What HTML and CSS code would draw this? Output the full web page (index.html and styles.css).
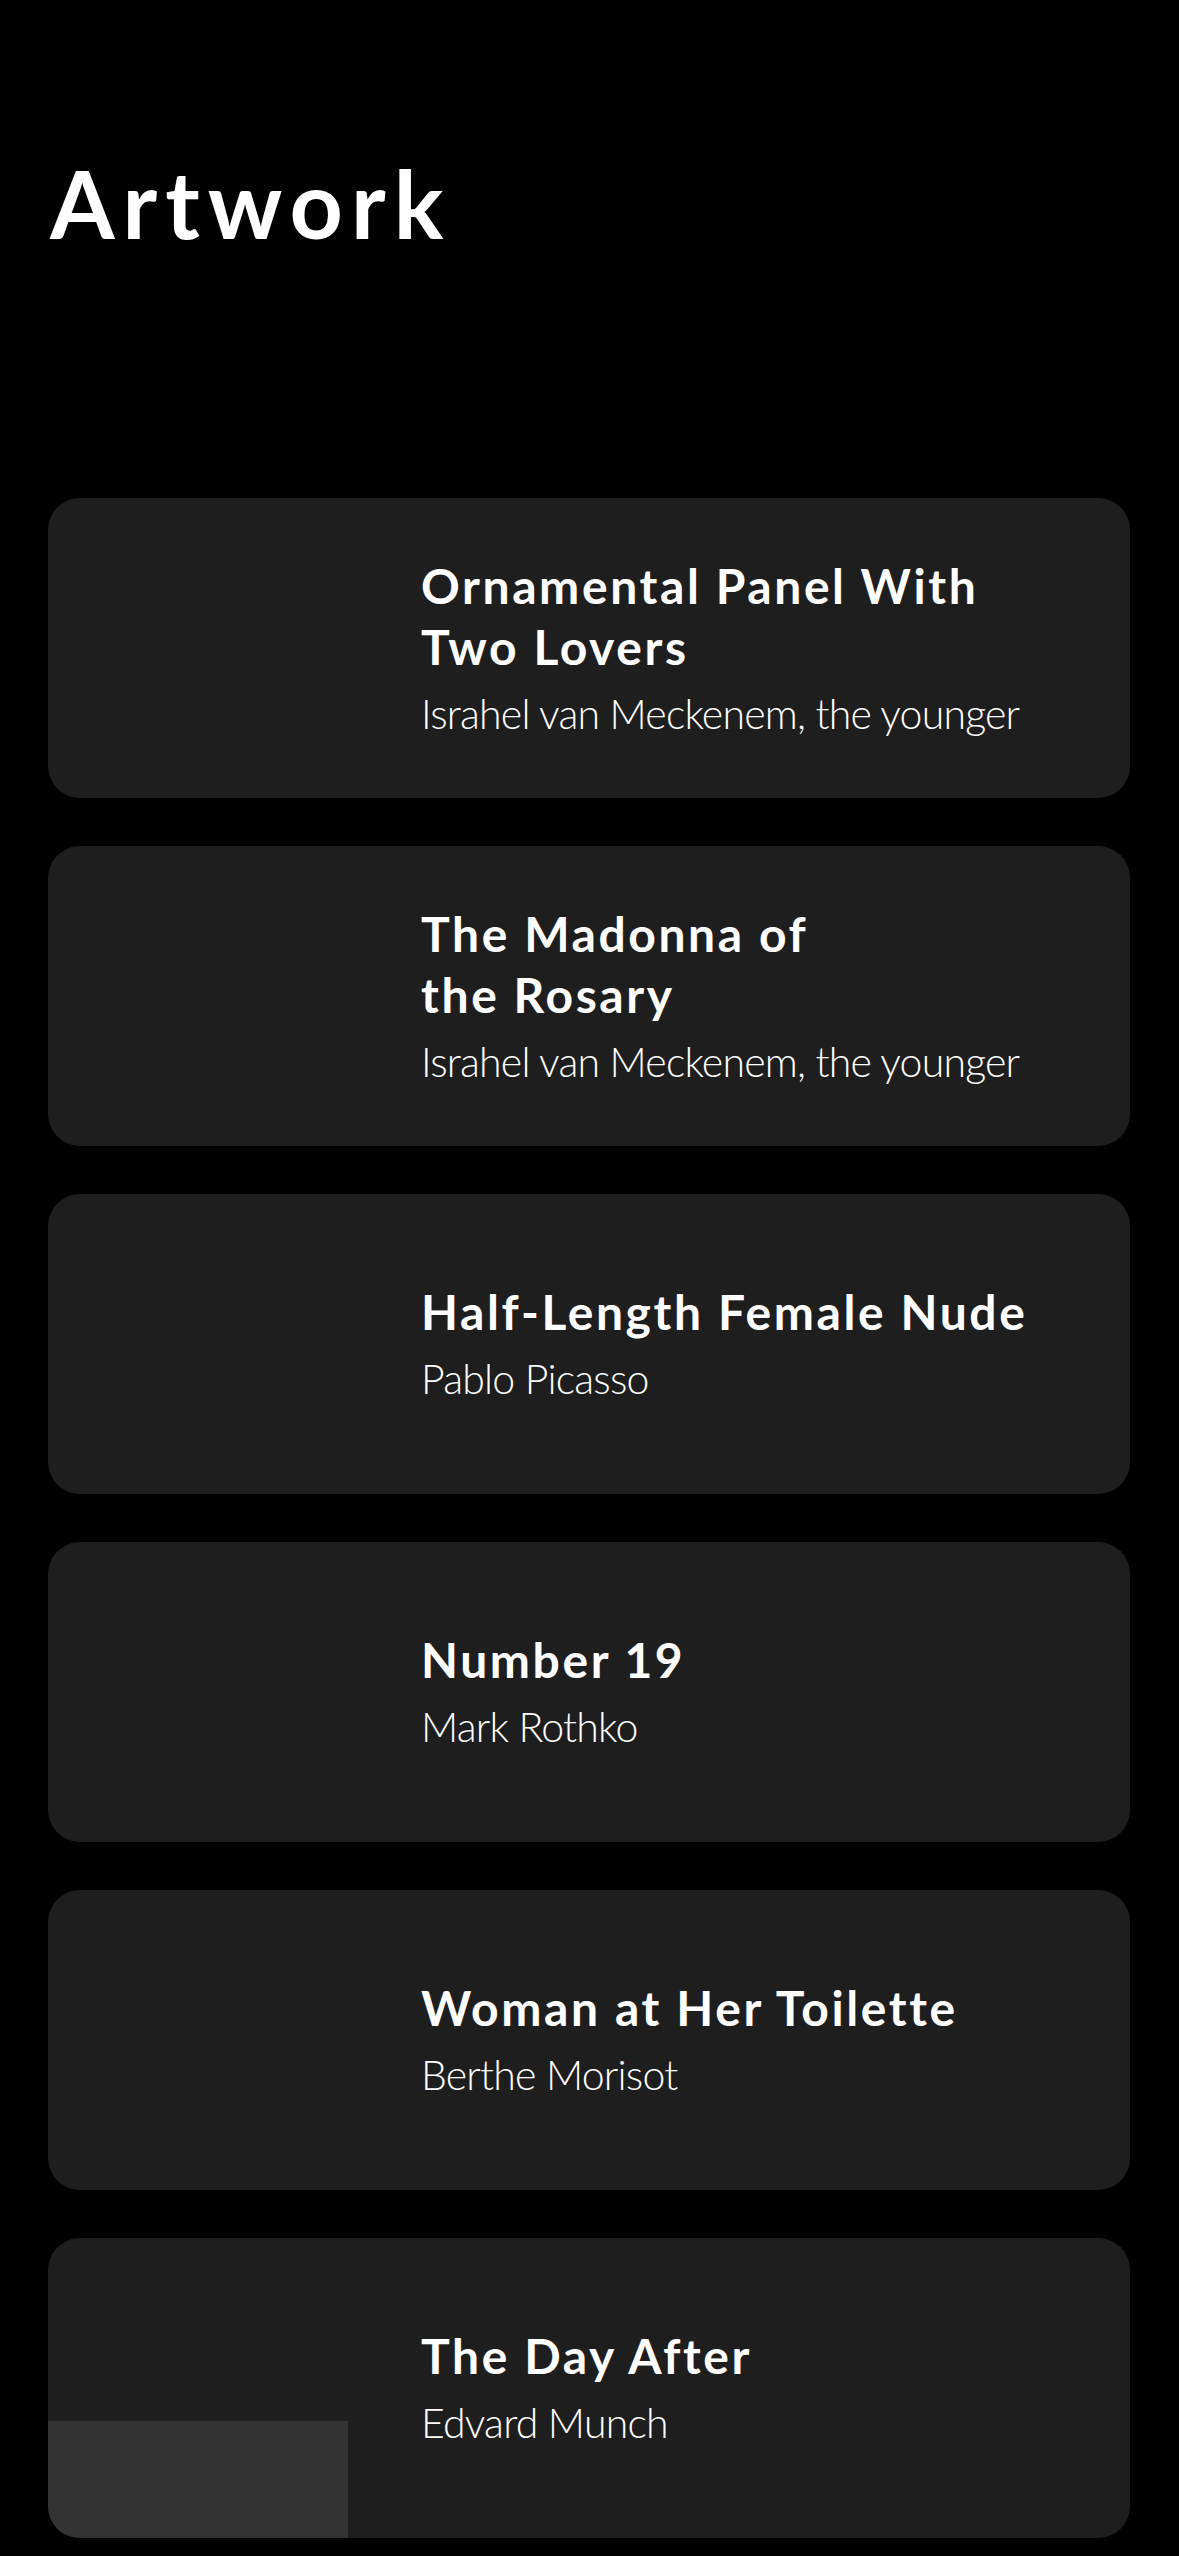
FILE: index.html
```html
<!DOCTYPE html>
<html lang="en">
<head>
<meta charset="utf-8">
<title>Artwork</title>
<link rel="stylesheet" href="styles.css">
</head>
<body>
<main class="page">
  <h1 class="page-title">Artwork</h1>
  <ul class="art-list">
    <li class="art-card">
      <div class="art-thumb"></div>
      <div class="art-text">
        <h2 class="art-title">Ornamental Panel With<br>Two Lovers</h2>
        <p class="art-artist">Israhel van Meckenem, the younger</p>
      </div>
    </li>
    <li class="art-card">
      <div class="art-thumb"></div>
      <div class="art-text">
        <h2 class="art-title">The Madonna of<br>the Rosary</h2>
        <p class="art-artist">Israhel van Meckenem, the younger</p>
      </div>
    </li>
    <li class="art-card">
      <div class="art-thumb"></div>
      <div class="art-text">
        <h2 class="art-title">Half-Length Female Nude</h2>
        <p class="art-artist">Pablo Picasso</p>
      </div>
    </li>
    <li class="art-card">
      <div class="art-thumb"></div>
      <div class="art-text">
        <h2 class="art-title">Number 19</h2>
        <p class="art-artist">Mark Rothko</p>
      </div>
    </li>
    <li class="art-card">
      <div class="art-thumb"></div>
      <div class="art-text">
        <h2 class="art-title">Woman at Her Toilette</h2>
        <p class="art-artist">Berthe Morisot</p>
      </div>
    </li>
    <li class="art-card">
      <div class="art-thumb"><div class="art-thumb-loading"></div></div>
      <div class="art-text">
        <h2 class="art-title">The Day After</h2>
        <p class="art-artist">Edvard Munch</p>
      </div>
    </li>
  </ul>
</main>
</body>
</html>
```
FILE: styles.css
```css
* {
  box-sizing: border-box;
}

html, body {
  margin: 0;
  padding: 0;
  background: #000000;
}

body {
  font-family: "Lato", "Open Sans", "Liberation Sans", sans-serif;
  color: #ffffff;
  height: 2556px;
  overflow: hidden;
}

.page {
  padding-top: 147px;
}

.page-title {
  margin: 0 0 0 50px;
  font-size: 93px;
  line-height: 112px;
  font-weight: 700;
  letter-spacing: 8px;
}

.art-list {
  list-style: none;
  margin: 239px 49px 0 48px;
  padding: 0;
  display: flex;
  flex-direction: column;
  gap: 48px;
}

.art-card {
  height: 300px;
  background: #1e1e1e;
  border-radius: 32px;
  overflow: hidden;
  display: flex;
  align-items: center;
}

.art-thumb {
  width: 300px;
  height: 300px;
  flex: none;
  display: flex;
  flex-direction: column;
  justify-content: flex-end;
}

.art-thumb-loading {
  height: 117px;
  background: #333333;
}

.art-text {
  margin-left: 73px;
  display: flex;
  flex-direction: column;
}

.art-title {
  margin: 0;
  font-size: 48px;
  line-height: 61px;
  font-weight: 700;
  letter-spacing: 2.6px;
}

.art-artist {
  margin: 9px 0 0 0;
  font-size: 41px;
  line-height: 56px;
  font-weight: 300;
  letter-spacing: -0.8px;
}
```
